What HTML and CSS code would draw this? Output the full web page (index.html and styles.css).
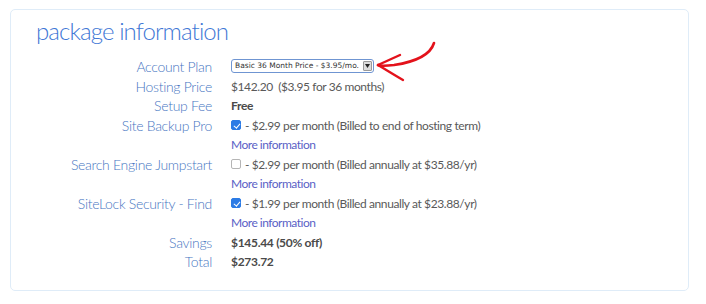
FILE: index.html
```html
<!DOCTYPE html>
<html>
<head>
<meta charset="utf-8">
<link rel="stylesheet" href="styles.css">
</head>
<body>
<section class="panel">
  <h2 class="title">package information</h2>
  <div class="grid">
    <div class="label">Account Plan</div>
    <div class="value">
      <span class="select-wrap">
        <select class="select"><option>Basic 36 Month Price - $3.95/mo.</option></select>
        <span class="select-btn"><svg width="5" height="4" viewBox="0 0 5 4"><path d="M0 0h5L2.5 4z" fill="#222"/></svg></span>
      </span>
    </div>

    <div class="label">Hosting Price</div>
    <div class="value">$142.20&nbsp;&nbsp;($3.95 for 36 months)</div>

    <div class="label">Setup Fee</div>
    <div class="value strong">Free</div>

    <div class="label">Site Backup Pro</div>
    <div class="value">
      <div class="opt"><input type="checkbox" class="cb" checked> - $2.99 per month (Billed to end of hosting term)</div>
      <a class="more" href="#">More information</a>
    </div>

    <div class="label">Search Engine Jumpstart</div>
    <div class="value">
      <div class="opt"><input type="checkbox" class="cb"> - $2.99 per month (Billed annually at $35.88/yr)</div>
      <a class="more" href="#">More information</a>
    </div>

    <div class="label">SiteLock Security - Find</div>
    <div class="value">
      <div class="opt"><input type="checkbox" class="cb" checked> - $1.99 per month (Billed annually at $23.88/yr)</div>
      <a class="more" href="#">More information</a>
    </div>

    <div class="label">Savings</div>
    <div class="value strong">$145.44 (50% off)</div>

    <div class="label">Total</div>
    <div class="value strong">$273.72</div>
  </div>
  <svg class="arrow" width="80" height="60" viewBox="0 0 80 60">
    <path d="M64 5 C60 18 44 24 24 27 C16 28 10 28 8 27" fill="none" stroke="#e3121b" stroke-width="2.6" stroke-linecap="round"/>
    <path d="M8 27 L30 17" fill="none" stroke="#e3121b" stroke-width="2.4" stroke-linecap="round"/>
    <path d="M8 27 C18 33 26 38 33 42" fill="none" stroke="#e3121b" stroke-width="2.4" stroke-linecap="round"/>
  </svg>
</section>
</body>
</html>
```

FILE: styles.css
```css
html, body {
  margin: 0;
  padding: 0;
  background: #ffffff;
}
body {
  font-family: Lato, "Open Sans", sans-serif;
  color: #555555;
}
.panel {
  position: relative;
  box-sizing: border-box;
  margin: 9px 0 0 10px;
  width: 679px;
  height: 282px;
  border: 1px solid #dfecf8;
  border-radius: 5px;
  padding: 5px 0 0 25px;
}
.title {
  margin: 0;
  font-weight: 300;
  font-size: 24px;
  line-height: 32px;
  color: #3f78d6;
  letter-spacing: -0.9px;
}
.grid {
  display: grid;
  grid-template-columns: 176px auto;
  column-gap: 19px;
  margin-top: 10px;
  line-height: 19.5px;
}
.label {
  text-align: right;
  font-size: 14px;
  font-weight: 300;
  letter-spacing: -0.3px;
  color: #4776c2;
  white-space: nowrap;
}
.value {
  font-size: 12px;
  letter-spacing: -0.4px;
  color: #595959;
  white-space: nowrap;
}
.strong {
  color: #4a4a4a;
  font-weight: 700;
  letter-spacing: -0.3px;
}
.select-wrap {
  position: relative;
  display: inline-flex;
  vertical-align: top;
  margin-top: 2px;
  letter-spacing: 0;
}
.select {
  appearance: none;
  -webkit-appearance: none;
  box-sizing: border-box;
  width: 143px;
  height: 14px;
  border: 1px solid #6f95d2;
  border-radius: 3px;
  background: #ffffff;
  padding: 0 0 0 3px;
  margin: 0;
  font-family: "DejaVu Sans", Verdana, sans-serif;
  font-size: 7.5px;
  line-height: 12px;
  color: #333;
}
.select-btn {
  position: absolute;
  right: 2px;
  top: 2px;
  width: 9px;
  height: 10px;
  background: #dcdcdc;
  border: 1px solid #9a9a9a;
  box-sizing: border-box;
  border-radius: 1px;
  display: flex;
  align-items: center;
  justify-content: center;
}
.opt {
  display: flex;
  align-items: center;
  gap: 3px;
}
.cb {
  appearance: none;
  -webkit-appearance: none;
  margin: 0 1px 0 0;
  width: 10px;
  height: 10px;
  box-sizing: border-box;
  border: 1px solid #b5b5b5;
  border-radius: 2px;
  background: #fff;
  position: relative;
}
.cb:checked {
  background: #2c7be5;
  border-color: #2c7be5;
}
.cb:checked::after {
  content: "";
  position: absolute;
  left: 2.5px;
  top: 0.5px;
  width: 2.5px;
  height: 5px;
  border: solid #fff;
  border-width: 0 1.4px 1.4px 0;
  transform: rotate(40deg);
}
.more {
  display: block;
  font-size: 12px;
  letter-spacing: -0.5px;
  color: #5a5fc6;
  text-decoration: none;
}
.arrow {
  position: absolute;
  left: 359px;
  top: 28px;
}
```
